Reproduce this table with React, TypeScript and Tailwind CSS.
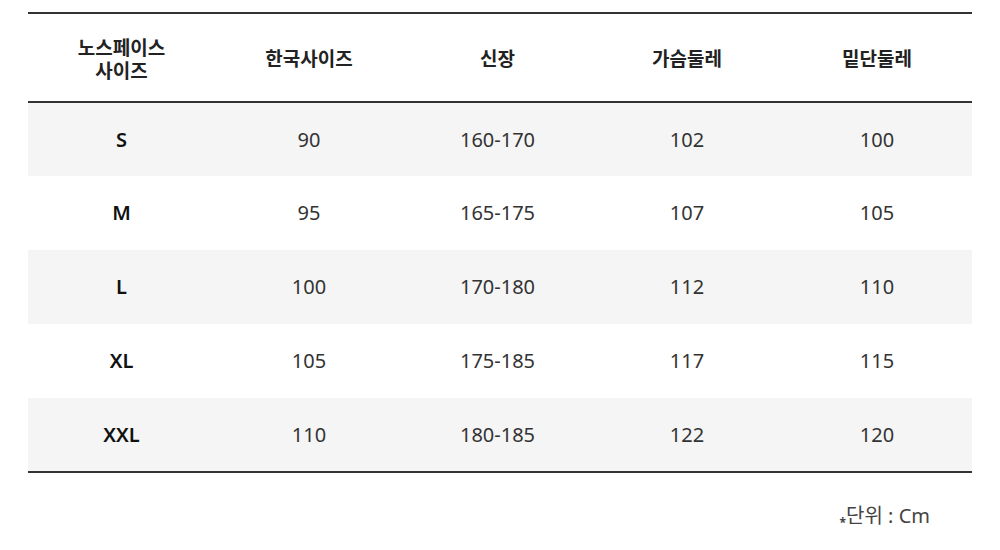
const headers = ["노스페이스\n사이즈", "한국사이즈", "신장", "가슴둘레", "밑단둘레"];

const rows = [
  ["S", "90", "160-170", "102", "100"],
  ["M", "95", "165-175", "107", "105"],
  ["L", "100", "170-180", "112", "110"],
  ["XL", "105", "175-185", "117", "115"],
  ["XXL", "110", "180-185", "122", "120"],
];

export default function App() {
  return (
    <div
      className="w-[1000px] h-[550px] bg-white text-[#222]"
      style={{ fontFamily: '"Noto Sans", "Noto Sans CJK KR", sans-serif' }}
    >
      <div className="ml-[28px] w-[944px] pt-[12px]">
        <table className="w-full border-collapse table-fixed">
          <colgroup>
            <col className="w-[187px]" />
            <col className="w-[188px]" />
            <col className="w-[189px]" />
            <col className="w-[190px]" />
            <col className="w-[190px]" />
          </colgroup>
          <thead>
            <tr className="border-t-2 border-b-2 border-[#333]">
              {headers.map((h) => (
                <th
                  key={h}
                  className="h-[89px] text-[19px] font-bold leading-[23px] whitespace-pre-line text-center align-middle"
                  style={{ fontFamily: '"Noto Sans CJK KR", sans-serif' }}
                >
                  {h}
                </th>
              ))}
            </tr>
          </thead>
          <tbody>
            {rows.map((r, i) => (
              <tr
                key={r[0]}
                className={`${i % 2 === 0 ? "bg-[#f5f5f5]" : "bg-white"} ${
                  i === rows.length - 1 ? "border-b-2 border-[#333]" : ""
                }`}
              >
                {r.map((c, j) => (
                  <td
                    key={j}
                    className={`h-[74px] text-center align-middle text-[20px] ${
                      j === 0 ? "font-semibold text-[#111]" : "text-[#333]"
                    }`}
                  >
                    {c}
                  </td>
                ))}
              </tr>
            ))}
          </tbody>
        </table>
        <div className="mt-[27px] pr-[42px] text-right text-[20px] text-[#444]">
          <span className="relative top-[4px] text-[12px] font-bold">*</span>
          <span style={{ fontFamily: '"Noto Sans CJK KR", sans-serif' }}>단위</span> : Cm
        </div>
      </div>
    </div>
  );
}
